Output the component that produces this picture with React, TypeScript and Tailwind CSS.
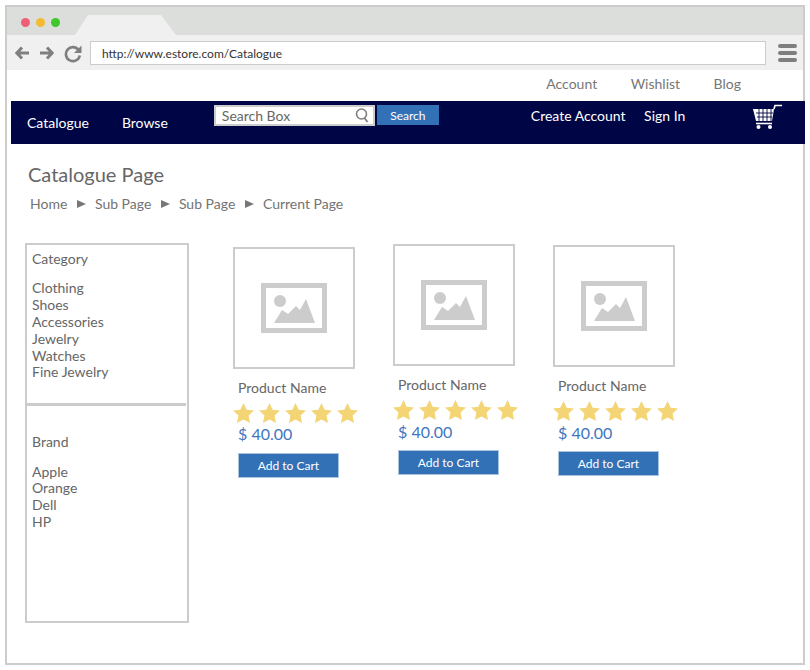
import React from "react";

const Star = () => (
  <svg width="23" height="22" viewBox="0 0 23 22" className="shrink-0">
    <path d="M11.5 1 L14.7 7.7 L22 8.6 L16.6 13.6 L18 21 L11.5 17.4 L5 21 L6.4 13.6 L1 8.6 L8.3 7.7 Z" fill="#f4d576" />
  </svg>
);

const Placeholder = () => (
  <svg width="66" height="50" viewBox="0 0 66 50">
    <rect x="2.5" y="2.5" width="61" height="45" fill="none" stroke="#cccccc" strokeWidth="5" />
    <circle cx="19" cy="18" r="6" fill="#cccccc" />
    <path d="M13 40 L21 27 L27 31 L35 23 L39 27 L45 16 L54 40 Z" fill="#cccccc" />
  </svg>
);

const Product = ({ offset, priceShift }: { offset: number; priceShift: number }) => (
  <div className="w-[124px]" style={{ marginTop: offset }}>
    <div className="w-[122px] h-[122px] border-2 border-[#cccccc] flex items-center justify-center">
      <Placeholder />
    </div>
    <div className="pl-[5px] mt-[10px] text-[14px] leading-[17px] text-[#666666]">Product Name</div>
    <div className="flex gap-[2.9px] mt-[6px] -ml-[1px] w-[130px]">
      <Star /><Star /><Star /><Star /><Star />
    </div>
    <div className="pl-[5px] text-[16px] leading-[20px] text-[#3f76bd]" style={{ marginTop: priceShift }}>$ 40.00</div>
    <div className="ml-[5px] w-[101px] h-[25px] bg-[#3371b7] border border-[#a9c3e0] flex items-center justify-center text-[12px] text-white" style={{ marginTop: 9 - priceShift }}>
      Add to Cart
    </div>
  </div>
);

const Crumb = () => <span className="w-0 h-0 border-y-[4px] border-y-transparent border-l-[9px] border-l-[#777777]" />;

export default function App() {
  return (
    <div className="w-[810px] h-[670px] bg-white pt-[5px] pl-[5px] font-['Lato','Noto_Sans',sans-serif]">
      <div className="w-[800px] h-[660px] border-2 border-[#cccccc]">
        <div className="relative h-[28px] bg-[#dcdedb] flex items-center pl-[14px] gap-[5px]">
          <span className="w-[9px] h-[9px] rounded-full bg-[#ef6074] mt-[3px]" />
          <span className="w-[9px] h-[9px] rounded-full bg-[#f2bb33] mt-[3px] ml-[1px]" />
          <span className="w-[9px] h-[9px] rounded-full bg-[#3ec82b] mt-[3px] ml-[1px]" />
          <svg className="absolute left-[68px] top-[8px]" width="102" height="20" viewBox="0 0 102 20">
            <path d="M0 20 L13 0 H86 L101 20 Z" fill="#f0f0f0" />
          </svg>
        </div>
        <div className="h-[35px] bg-[#f0f0f0] flex items-center pl-[8px] pr-[5px]">
          <svg width="14" height="14" viewBox="0 0 14 14">
            <path d="M7 1.5 L1.8 7 L7 12.5 M2.5 7 H14" fill="none" stroke="#7f7f7f" strokeWidth="3" />
          </svg>
          <svg className="ml-[11px]" width="14" height="14" viewBox="0 0 14 14">
            <path d="M7 1.5 L12.2 7 L7 12.5 M11.5 7 H0" fill="none" stroke="#7f7f7f" strokeWidth="3" />
          </svg>
          <svg className="ml-[10px] mt-[2px]" width="18" height="18" viewBox="0 0 18 18">
            <path d="M14.6 5 A7 7 0 1 0 15.8 10.5" fill="none" stroke="#7f7f7f" strokeWidth="2.6" />
            <path d="M17.5 0.5 V8 H10 Z" fill="#7f7f7f" />
          </svg>
          <div className="ml-[8px] w-[676px] h-[24px] bg-white border border-[#cccccc] flex items-center pl-[11px] pt-[2px] text-[12px] text-[#333333]">
            http://www.estore.com/Catalogue
          </div>
          <div className="ml-[12px] flex flex-col gap-[3px]">
            <span className="w-[19px] h-[4px] rounded-full bg-[#7f7f7f]" />
            <span className="w-[19px] h-[4px] rounded-full bg-[#7f7f7f]" />
            <span className="w-[19px] h-[4px] rounded-full bg-[#7f7f7f]" />
          </div>
        </div>
        <div className="h-[31px] flex justify-end items-center gap-[33.5px] pr-[62px] text-[14px] text-[#777777] pb-[5px]">
          <span>Account</span>
          <span>Wishlist</span>
          <span>Blog</span>
        </div>
        <div className="ml-[4px] -mr-[2px] h-[43px] bg-[#000645] flex text-[14px] text-white">
          <span className="ml-[16px] mt-[11px]">Catalogue</span>
          <span className="ml-[33px] mt-[11px]">Browse</span>
          <div className="ml-[46px] mt-[4px] w-[161px] h-[21px] bg-white border-2 border-[#cccccc] flex items-center justify-between pl-[6px] pr-[4px] text-[#666666]">
            <span>Search Box</span>
            <svg width="14" height="15" viewBox="0 0 14 15">
              <circle cx="6.5" cy="6" r="5" fill="none" stroke="#808080" strokeWidth="1.6" />
              <path d="M9.5 10 L12.5 14" stroke="#808080" strokeWidth="1.8" />
            </svg>
          </div>
          <div className="ml-[2px] mt-[4px] w-[62px] h-[20px] pt-[1px] bg-[#3371b7] flex items-center justify-center text-[12px]">Search</div>
          <span className="ml-[92px] mt-[4px]">Create Account</span>
          <span className="ml-[18.5px] mt-[4px]">Sign In</span>
          <svg className="ml-[66px] mt-[3px]" width="31" height="26" viewBox="0 0 31 26">
            <path d="M2 5 H23 L21 17 H5 Z" fill="white" />
            <path d="M23 5 L24 1.5 H31" fill="none" stroke="white" strokeWidth="1.6" />
            <path d="M5 9 H22 M6 13 H21 M8 5 V17 M12 5 V17 M16 5 V17 M20 5 V17" stroke="#000645" strokeWidth="0.9" />
            <path d="M5 19.5 H21" stroke="white" strokeWidth="1.6" />
            <circle cx="7.5" cy="23" r="2" fill="white" />
            <circle cx="19" cy="23" r="2" fill="white" />
          </svg>
        </div>
        <div className="pl-[21px] pt-[17px] text-[#666666]">
          <div className="text-[20px] leading-[26px]">Catalogue Page</div>
          <div className="ml-[2px] mt-[8px] flex items-center gap-[9.3px] text-[14px] leading-[18px] text-[#737373]">
            <span>Home</span><Crumb /><span>Sub Page</span><Crumb /><span>Sub Page</span><Crumb /><span>Current Page</span>
          </div>
        </div>
        <div className="flex pl-[18px] mt-[30px]">
          <div className="w-[164px] h-[380px] border-2 border-[#cccccc] text-[14px] text-[#666666] leading-[17px]">
            <div className="h-[158px] pl-[5px] pt-[5px]">
              <div>Category</div>
              <div className="mt-[12px]">Clothing</div>
              <div>Shoes</div>
              <div>Accessories</div>
              <div>Jewelry</div>
              <div>Watches</div>
              <div className="-mt-[1px]">Fine Jewelry</div>
            </div>
            <div className="h-[3px] bg-[#cccccc] mr-[1px]" />
            <div className="pl-[5px] pt-[27px]">
              <div>Brand</div>
              <div className="mt-[13px]">Apple</div>
              <div className="-mt-[1px]">Orange</div>
              <div>Dell</div>
              <div>HP</div>
            </div>
          </div>
          <div className="flex ml-[44px] gap-[36px]">
            <Product offset={4} priceShift={0} />
            <Product offset={1} priceShift={1} />
            <Product offset={2} priceShift={1} />
          </div>
        </div>
      </div>
    </div>
  );
}
